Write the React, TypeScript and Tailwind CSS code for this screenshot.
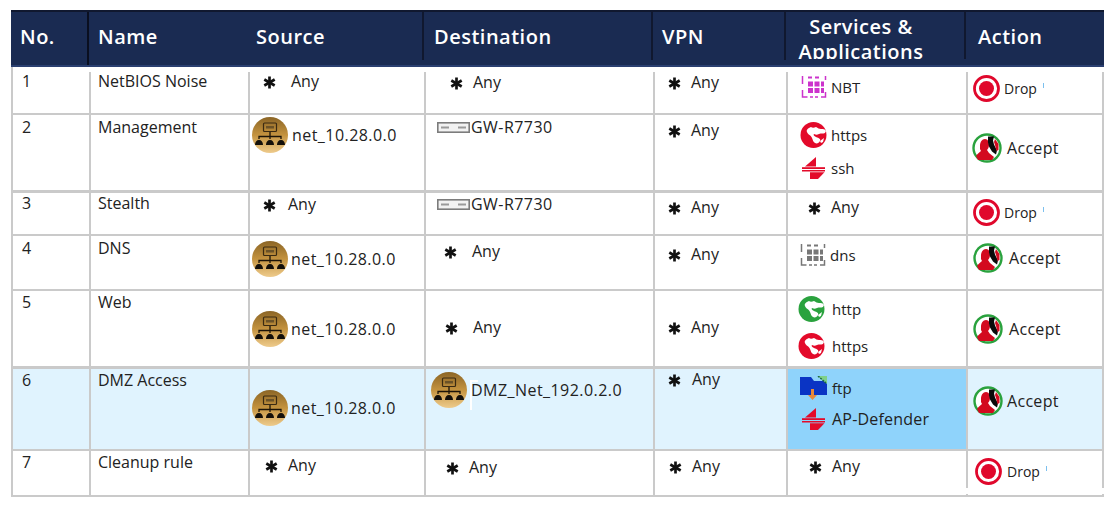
import React from "react";

const Star = () => (
  <svg width="13" height="13" viewBox="0 0 13 13" className="shrink-0 mt-[2px]">
    <g stroke="#111" strokeWidth="2.700" strokeLinecap="butt">
      <line x1="6.500" y1="0.500" x2="6.500" y2="12.500" />
      <line x1="1.300" y1="3.500" x2="11.700" y2="9.500" />
      <line x1="11.700" y1="3.500" x2="1.300" y2="9.500" />
    </g>
  </svg>
);

const NetIcon = () => (
  <svg width="36" height="36" viewBox="0 0 36 36" className="shrink-0">
    <defs>
      <linearGradient id="gold" x1="0" y1="0" x2="0" y2="1">
        <stop offset="0" stopColor="#8b6526" />
        <stop offset="0.5" stopColor="#c4933f" />
        <stop offset="1" stopColor="#eecb8c" />
      </linearGradient>
    </defs>
    <circle cx="18" cy="18" r="18" fill="url(#gold)" />
    <rect x="11.500" y="6" width="13" height="8.500" rx="1" fill="none" stroke="#3a2a12" strokeWidth="1.200" />
    <rect x="14" y="9" width="8" height="2.500" fill="#6b5227" />
    <path d="M18 15v4M7 22v-2.500h22V22M18 19v3" fill="none" stroke="#1c1408" strokeWidth="1.300" />
    <path d="M3 28c0-3 1.500-5 4-5s4 2 4 5zM14 28c0-3 1.500-5 4-5s4 2 4 5zM25 28c0-3 1.500-5 4-5s4 2 4 5z" fill="#14100a" />
  </svg>
);

const Gw = () => (
  <svg width="33" height="11" viewBox="0 0 33 11" className="shrink-0">
    <rect x="0.800" y="0.800" width="31.400" height="9.400" fill="#f2f2f2" stroke="#7c7c7c" strokeWidth="1.600" />
    <rect x="4" y="4.500" width="8" height="2" fill="#9a9a9a" />
    <rect x="21" y="4.500" width="8" height="2" fill="#9a9a9a" />
  </svg>
);

const Globe = ({ color }: { color: string }) => (
  <svg width="27" height="26" viewBox="0 0 27 26" className="shrink-0">
    <circle cx="13.500" cy="13" r="13" fill={color} />
    <path d="M7 10c-1-2 1-4 4-5 1 1 3 1 5 0 2 1 3 2 5 2 2 0 4 0 5 2l-1 2c-2 1-4 0-6 1-2 1-3 1-5 0-1 1 0 2 2 3 3 1 5 2 4 4-1 2-3 3-5 2-2-1-2-3-3-5-1-3-4-3-5-6z" fill="#fff" />
    <path d="M20 19l4-3-1 4-2 1z" fill="#fff" />
  </svg>
);

const Split = () => (
  <svg width="23" height="22" viewBox="0 0 23 22" className="shrink-0">
    <g fill="#e30a2a">
      <path d="M14 0v9.500H3z" />
      <rect x="0" y="10.200" width="23" height="1.800" />
      <rect x="0" y="13" width="23" height="1.500" />
      <path d="M8 15.300h14.500L16 22H8z" />
    </g>
  </svg>
);

const Dots = ({ color }: { color: string }) => (
  <svg width="26" height="24" viewBox="0 0 26 24" className="shrink-0">
    <g fill={color}>
      <rect x="7" y="6.500" width="5" height="5" />
      <rect x="13.500" y="6.500" width="5" height="5" />
      <rect x="7" y="13" width="5" height="5" />
      <rect x="13.500" y="13" width="5" height="5" />
      <rect x="20" y="6.500" width="3" height="5" />
      <rect x="20" y="13" width="3" height="5" />
      <rect x="7" y="1.500" width="4" height="2" />
      <rect x="14" y="1.500" width="4" height="2" />
    </g>
    <g fill="none" stroke={color} strokeWidth="1.500">
      <path d="M1.500 9V1M1.500 15v7h5M20 22h4.500v-5M24.500 5V1" />
      <path d="M9 22h8" strokeDasharray="3 2" />
    </g>
  </svg>
);

const Folder = () => (
  <svg width="27" height="24" viewBox="0 0 27 24" className="shrink-0">
    <path d="M0 1h11l3 4h13v14H0z" fill="#0a34c4" />
    <path d="M18 0h9v8z" fill="#7fd08a" />
    <path d="M18 0l8 7" stroke="#1c6b3a" strokeWidth="1.500" strokeDasharray="2 1" />
    <path d="M11 13h3v6h3l-4.500 5L8 19h3z" fill="#e8893a" />
  </svg>
);

const Drop = () => (
  <svg width="27" height="27" viewBox="0 0 27 27" className="shrink-0">
    <circle cx="13.500" cy="13.500" r="12" fill="#fff" stroke="#e0082c" strokeWidth="2.800" />
    <circle cx="13.500" cy="13.500" r="7.500" fill="#e0082c" />
  </svg>
);

const Accept = () => (
  <svg width="30" height="30" viewBox="0 0 30 30" className="shrink-0">
    <circle cx="15" cy="15" r="13.500" fill="#fff" stroke="#2aa23e" strokeWidth="2.400" />
    <path d="M8 13c0-4 2-7 5-7s4 3 4 6c0 2-1 4-2 5l2 3 5 4-2 3H6l-2-4c1-2 3-3 5-5l-1-2z" fill="#d30a1f" />
    <path d="M16 3.500h6l-1 4 1 4 3 6-1 4-4-3-3-5-1-4z" fill="#0a0a0a" />
    <path d="M23 6l3.500 5 0 6-2 1-1.500-6-1-3z" fill="#d30a1f" />
  </svg>
);

const Any = ({ gap }: { gap: string }) => (
  <div className="flex items-center h-5">
    <Star />
    <span className={`${gap} text-[16px]`}>Any</span>
  </div>
);

const Tick = () => <span className="ml-[6px] mt-[-6px] w-[1px] h-[5px] bg-[#7cc0ee]" />;

const Item = ({ icon, text, gap }: { icon: React.ReactNode; text: string; gap: string }) => (
  <div className="flex items-center min-h-5">
    {icon}
    <span className={gap}>{text}</span>
  </div>
);

const DropItem = ({ gap }: { gap: string }) => (
  <div className="flex items-center">
    <Drop />
    <span className={`${gap} text-[14px]`}>Drop</span>
    <Tick />
  </div>
);

const Cell = ({ className = "", children }: { className?: string; children?: React.ReactNode }) => (
  <div className={`border-r-2 border-b-2 border-[#cacaca] ${className}`}>{children}</div>
);

const No = ({ className = "", children }: { className?: string; children?: React.ReactNode }) => (
  <Cell className={`pl-[9px] text-[16px] font-medium ${className}`}>{children}</Cell>
);

const Name = ({ className = "", children }: { className?: string; children?: React.ReactNode }) => (
  <Cell className={`pl-[7px] text-[16px] ${className}`}>{children}</Cell>
);

const Head = ({ children, className = "" }: { children: React.ReactNode; className?: string }) => (
  <div className={`flex items-center text-white text-[20px] font-semibold tracking-[0.5px] ${className}`}>
    {children}
  </div>
);

const NET = "text-[16px] tracking-[0.45px]";
const ACC = "text-[16px] tracking-[0.3px]";

export default function App() {
  return (
    <div className="w-[1113px] h-[506px] bg-white pt-[10px] pl-[11px] font-['Open_Sans',sans-serif] text-[15px] leading-5 text-[#222] overflow-hidden">
      <div className="relative w-[1093px]">
        <div className="grid grid-cols-[78px_159px_176px_229px_133px_180px_136px] grid-rows-[57px_48px_78px_43px_55px_78px_82px_46px] border-l-2 border-[#cacaca]">
          {/* header */}
          <div className="col-span-7 grid grid-cols-[76px_159px_176px_229px_133px_180px_136px] bg-[#1a2b52] border-t-2 border-[#10182f] border-b-2 border-b-[#2a3f70] -ml-[2px] pl-[2px] items-start">
            <Head className="pl-[7px] h-[53px] pb-[4px] border-r-2 border-[#0a0f20]">No.</Head>
            <Head className="pl-[9px] h-[48px] pt-[2px]">Name</Head>
            <Head className="pl-[8px] h-[48px] pt-[2px] border-r-2 border-[#10182f]">Source</Head>
            <Head className="pl-[10px] h-[48px] pt-[2px] border-r-2 border-[#10182f]">Destination</Head>
            <Head className="pl-[9px] h-[48px] pt-[2px] border-r-2 border-[#10182f]">VPN</Head>
            <Head className="!block h-[47px] pt-[2px] text-center overflow-hidden leading-[25px] pr-[28px] border-r-2 border-[#10182f] whitespace-nowrap">
              Services &amp;<br />Applications
            </Head>
            <Head className="pl-[12px] h-[48px] pt-[2px]">Action</Head>
          </div>

          {/* 1 */}
          <No className="pt-[4px]">1</No>
          <Name className="pt-[4px]">NetBIOS Noise</Name>
          <Cell className="pl-[13px] pt-[4px]"><Any gap="ml-[15px]" /></Cell>
          <Cell className="pl-[24px] pt-[5px]"><Any gap="ml-[10px]" /></Cell>
          <Cell className="pl-[13px] pt-[5px]"><Any gap="ml-[10px]" /></Cell>
          <Cell className="pl-[13px] pt-[8px]"><Item icon={<Dots color="#cc33cc" />} text="NBT" gap="ml-[4px]" /></Cell>
          <Cell className="pl-[5px] pt-[8px]"><DropItem gap="ml-[4px]" /></Cell>

          {/* 2 */}
          <No className="pt-[2px] !border-b-[3px]">2</No>
          <Name className="pt-[2px] !border-b-[3px]">Management</Name>
          <Cell className="pl-[2px] pt-[2px] !border-b-[3px]"><Item icon={<NetIcon />} text="net_10.28.0.0" gap={`ml-[4px] ${NET}`} /></Cell>
          <Cell className="pl-[11px] pt-[2px] !border-b-[3px]"><Item icon={<Gw />} text="GW-R7730" gap={`ml-[1px] ${NET}`} /></Cell>
          <Cell className="pl-[13px] pt-[5px] !border-b-[3px]"><Any gap="ml-[10px]" /></Cell>
          <Cell className="pl-[12px] pt-[7px] flex flex-col gap-[9px] !border-b-[3px]">
            <Item icon={<Globe color="#e30a2a" />} text="https" gap="ml-[4px]" />
            <div className="pl-[2px]"><Item icon={<Split />} text="ssh" gap="ml-[6px]" /></div>
          </Cell>
          <Cell className="pl-[4px] pt-[18px] !border-b-[3px]"><Item icon={<Accept />} text="Accept" gap={`ml-[5px] ${ACC}`} /></Cell>

          {/* 3 */}
          <No className="pt-0">3</No>
          <Name className="pt-0">Stealth</Name>
          <Cell className="pl-[13px] pt-[1px]"><Any gap="ml-[12px]" /></Cell>
          <Cell className="pl-[11px] pt-[1px]"><Item icon={<Gw />} text="GW-R7730" gap={`ml-[1px] ${NET}`} /></Cell>
          <Cell className="pl-[13px] pt-[4px]"><Any gap="ml-[10px]" /></Cell>
          <Cell className="pl-[20px] pt-[4px]"><Any gap="ml-[10px]" /></Cell>
          <Cell className="pl-[5px] pt-[6px]"><DropItem gap="ml-[4px]" /></Cell>

          {/* 4 */}
          <No className="pt-[2px]">4</No>
          <Name className="pt-[2px]">DNS</Name>
          <Cell className="pl-[2px] pt-[5px]"><Item icon={<NetIcon />} text="net_10.28.0.0" gap={`ml-[3px] ${NET}`} /></Cell>
          <Cell className="pl-[18px] pt-[5px]"><Any gap="ml-[15px]" /></Cell>
          <Cell className="pl-[13px] pt-[8px]"><Any gap="ml-[10px]" /></Cell>
          <Cell className="pl-[12px] pt-[7px]"><Item icon={<Dots color="#777777" />} text="dns" gap="ml-[4px]" /></Cell>
          <Cell className="pl-[5px] pt-[7px]"><Item icon={<Accept />} text="Accept" gap={`ml-[6px] ${ACC}`} /></Cell>

          {/* 5 */}
          <No className="pt-[1px] !border-b-[3px]">5</No>
          <Name className="pt-[1px] !border-b-[3px]">Web</Name>
          <Cell className="pl-[2px] pt-[20px] !border-b-[3px]"><Item icon={<NetIcon />} text="net_10.28.0.0" gap={`ml-[3px] ${NET}`} /></Cell>
          <Cell className="pl-[19px] pt-[26px] !border-b-[3px]"><Any gap="ml-[15px]" /></Cell>
          <Cell className="pl-[13px] pt-[26px] !border-b-[3px]"><Any gap="ml-[10px]" /></Cell>
          <Cell className="pl-[10px] pt-[5px] flex flex-col gap-[11px] !border-b-[3px]">
            <Item icon={<Globe color="#2aa23e" />} text="http" gap="ml-[7px]" />
            <Item icon={<Globe color="#e30a2a" />} text="https" gap="ml-[7px]" />
          </Cell>
          <Cell className="pl-[5px] pt-[23px] !border-b-[3px]"><Item icon={<Accept />} text="Accept" gap={`ml-[6px] ${ACC}`} /></Cell>

          {/* 6 */}
          <No className="pt-[1px] bg-[#e0f3fe]">6</No>
          <Name className="pt-[1px] bg-[#e0f3fe]">DMZ Access</Name>
          <Cell className="pl-[2px] pt-[21px] bg-[#e0f3fe]"><Item icon={<NetIcon />} text="net_10.28.0.0" gap={`ml-[3px] ${NET}`} /></Cell>
          <Cell className="pl-[5px] pt-[3px] bg-[#e0f3fe]"><Item icon={<NetIcon />} text="DMZ_Net_192.0.2.0" gap={`ml-[4px] ${NET}`} /></Cell>
          <Cell className="pl-[13px] pt-0 bg-[#e0f3fe]"><Any gap="ml-[11px]" /></Cell>
          <Cell className="pl-[12px] pt-[7px] bg-[#8fd3fb] flex flex-col gap-[8px]">
            <Item icon={<Folder />} text="ftp" gap="ml-[5px]" />
            <div className="pl-[2px]"><Item icon={<Split />} text="AP-Defender" gap="ml-[7px] text-[16px] tracking-[0.2px]" /></div>
          </Cell>
          <Cell className="pl-[5px] pt-[17px] bg-[#e0f3fe]"><Item icon={<Accept />} text="Accept" gap={`ml-[4px] ${ACC}`} /></Cell>

          {/* 7 */}
          <No className="pt-[1px]">7</No>
          <Name className="pt-[1px]">Cleanup rule</Name>
          <Cell className="pl-[15px] pt-[4px]"><Any gap="ml-[10px]" /></Cell>
          <Cell className="pl-[20px] pt-[6px]"><Any gap="ml-[10px]" /></Cell>
          <Cell className="pl-[14px] pt-[5px]"><Any gap="ml-[10px]" /></Cell>
          <Cell className="pl-[21px] pt-[5px]"><Any gap="ml-[10px]" /></Cell>
          <Cell className="pl-[7px] pt-[7px]"><DropItem gap="ml-[5px]" /></Cell>
        </div>
        {/* scanned-in white patches lying over the grid lines */}
        <div className="absolute left-[2px] top-[57px] w-[1091px] h-[5px] bg-white" />
        <div className="absolute left-[909px] top-[478px] w-[184px] h-[6px] bg-white" />
        <div className="absolute left-[459px] top-[370px] w-[8px] h-[30px] border-l-2 border-t-2 border-white" />
      </div>
    </div>
  );
}
